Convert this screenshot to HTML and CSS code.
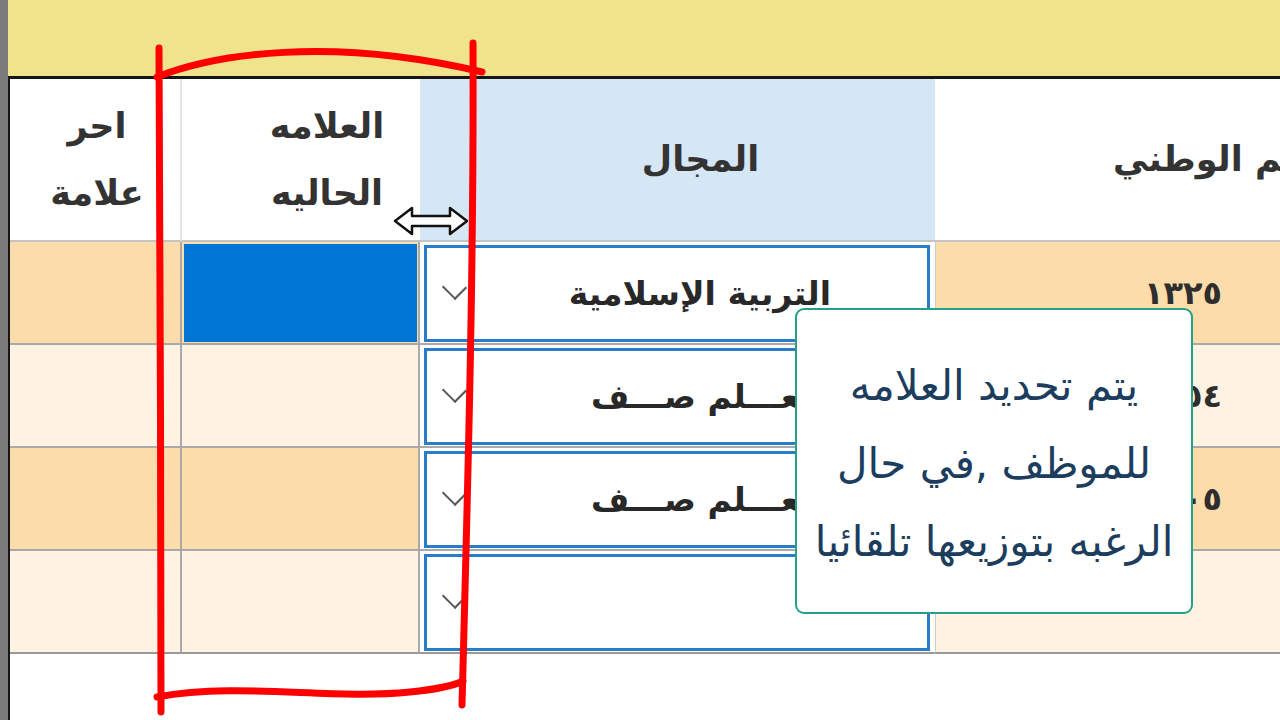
FILE: index.html
```html
<!DOCTYPE html>
<html lang="ar">
<head>
<meta charset="utf-8">
<title>Marks</title>
<link rel="stylesheet" href="styles.css">
</head>
<body>
<div class="screen">
  <div class="gutter"></div>
  <div class="content">
    <div class="topbar"></div>
    <div class="table">
      <div class="hcell h-a"><span class="htext">احر<br>علامة</span></div>
      <div class="hcell h-b"><span class="htext">العلامه<br>الحاليه</span></div>
      <div class="hcell h-c"><span class="htext">المجال</span></div>
      <div class="hcell h-d"><span class="htext">الرقم الوطني</span></div>

      <div class="cell c-a odd"></div>
      <div class="cell c-b odd"><div class="selected"></div></div>
      <div class="cell c-c"><div class="combo"><span class="chev"></span><span class="combo-text">التربية الإسلامية</span></div></div>
      <div class="cell c-d odd"><span class="num">١٣٢٥</span></div>

      <div class="cell c-a even"></div>
      <div class="cell c-b even"></div>
      <div class="cell c-c"><div class="combo"><span class="chev"></span><span class="combo-text">مـعـــلم صـــف</span></div></div>
      <div class="cell c-d even"><span class="num">١٣٥٤</span></div>

      <div class="cell c-a odd"></div>
      <div class="cell c-b odd"></div>
      <div class="cell c-c"><div class="combo"><span class="chev"></span><span class="combo-text">مـعـــلم صـــف</span></div></div>
      <div class="cell c-d odd"><span class="num">١٣٠٥</span></div>

      <div class="cell c-a even last"></div>
      <div class="cell c-b even last"></div>
      <div class="cell c-c last"><div class="combo"><span class="chev"></span><span class="combo-text"></span></div></div>
      <div class="cell c-d even last"></div>
    </div>
  </div>

  <svg class="cursor" width="76" height="32" viewBox="0 0 76 32">
    <polygon points="2,16 19,3 19,11 57,11 57,3 74,16 57,29 57,21 19,21 19,29" fill="#ffffff" stroke="#111111" stroke-width="2.5" stroke-linejoin="round"/>
  </svg>

  <div class="tooltip">
    <p>يتم تحديد العلامه</p>
    <p>للموظف ,في حال</p>
    <p>الرغبه بتوزيعها تلقائيا</p>
  </div>

  <svg class="marker" width="1280" height="720" viewBox="0 0 1280 720">
    <g fill="none" stroke="#ff0000" stroke-width="7" stroke-linecap="round" stroke-linejoin="round">
      <path d="M159 48 C160 250, 161 500, 161 712"/>
      <path d="M473 43 C474 260, 468 480, 462 705"/>
      <path d="M157 77 C215 54, 330 36, 482 72"/>
      <path d="M157 697 C240 682, 330 700, 410 692 C440 689, 455 685, 463 681"/>
    </g>
  </svg>
</div>
</body>
</html>
```

FILE: styles.css
```css
* { box-sizing: border-box; }
html, body { margin: 0; padding: 0; }
body {
  width: 1280px;
  height: 720px;
  overflow: hidden;
  background: #ffffff;
  font-family: "DejaVu Sans", "Noto Sans", sans-serif;
  color: #262626;
}
.screen {
  position: relative;
  display: flex;
  width: 1280px;
  height: 720px;
  overflow: hidden;
}
.gutter {
  flex: none;
  width: 8px;
  background: #7b7b7b;
}
.content {
  flex: 1;
  min-width: 0;
  display: flex;
  flex-direction: column;
}
.topbar {
  flex: none;
  height: 79px;
  background: #efe38b;
  border-bottom: 3px solid #161616;
}
.table {
  flex: 1;
  border-left: 2px solid #161616;
  display: grid;
  grid-template-columns: 172px 238px 515px 345px;
  grid-template-rows: 163px repeat(4, 103px);
  align-content: start;
}
.hcell {
  display: flex;
  align-items: center;
  border-bottom: 2px solid #c4c4c4;
  background: #ffffff;
  font-size: 35px;
  font-weight: bold;
  line-height: 67px;
  color: #333333;
  white-space: nowrap;
  overflow: hidden;
}
.htext { direction: rtl; }
.h-a { justify-content: center; text-align: center; border-right: 2px solid #e4e4e4; padding-left: 4px; }
.h-b { justify-content: center; text-align: center; padding-left: 52px; }
.h-c { justify-content: center; padding-left: 46px; background: #d5e6f5; }
.h-d { justify-content: flex-start; padding-left: 178px; }

.cell {
  border-bottom: 2px solid #a9a9a9;
  display: flex;
  align-items: center;
}
.cell.last { border-bottom-color: #9a9a9a; }
.odd { background: #fddcab; }
.even { background: #fef3e2; }
.c-a { border-right: 2px solid #a9a9a9; }
.c-b { border-right: 2px solid #a9a9a9; padding: 2px 1px 1px 2px; }
.selected {
  width: 100%;
  height: 100%;
  background: #0175d6;
}
.c-c {
  background: #ffffff;
  padding: 3px 5px 1px 4px;
}
.combo {
  width: 100%;
  height: 100%;
  border: 3px solid #2a7bc8;
  background: #ffffff;
  display: flex;
  align-items: center;
  justify-content: space-between;
  padding: 0 96px 0 13px;
}
.chev {
  width: 17px;
  height: 17px;
  border-right: 2px solid #5a5a5a;
  border-bottom: 2px solid #5a5a5a;
  transform: translateY(-6px) rotate(45deg) scaleX(1.1);
  margin-left: 6px;
}
.combo-text {
  direction: rtl;
  font-size: 33px;
  font-weight: bold;
  color: #282828;
  white-space: nowrap;
}
.c-d {
  justify-content: flex-end;
  padding-right: 58px;
  border-left: 1px solid #cccccc;
}
.num {
  font-size: 32px;
  font-weight: bold;
  color: #2e2e2e;
}

.cursor {
  position: absolute;
  left: 393px;
  top: 205px;
}
.tooltip {
  position: absolute;
  left: 795px;
  top: 308px;
  width: 398px;
  height: 306px;
  background: #ffffff;
  border: 2px solid #23a087;
  border-radius: 9px;
  padding-top: 37px;
  direction: rtl;
  text-align: center;
  color: #1c3d5d;
  font-size: 42px;
}
.tooltip p {
  margin: 0;
  line-height: 78px;
  white-space: nowrap;
}
.marker {
  position: absolute;
  left: 0;
  top: 0;
  pointer-events: none;
}
```
